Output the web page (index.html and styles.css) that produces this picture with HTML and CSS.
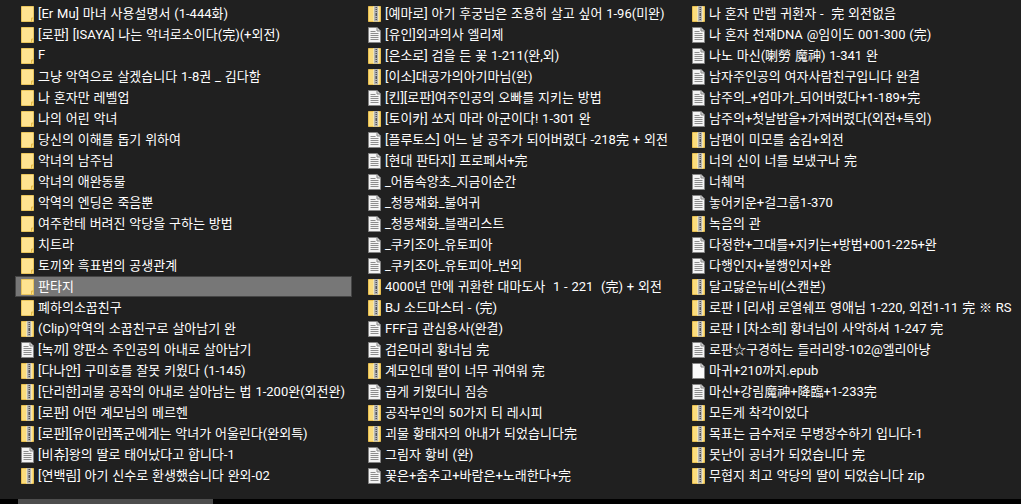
FILE: index.html
```html
<!DOCTYPE html>
<html lang="ko">
<head>
<meta charset="utf-8">
<title>파일 목록</title>
<link rel="stylesheet" href="styles.css">
</head>
<body>
<svg class="defs" width="0" height="0" aria-hidden="true">
  <defs>
    <symbol id="folder" viewBox="0 0 13 16">
      <path d="M.5.5h12v15H.5z" fill="#ffe390" stroke="#eac55c"/>
      <path d="M10.500 15.500v-3.500h2" fill="#f5d36b" stroke="#e2b94a"/>
    </symbol>
    <symbol id="zip" viewBox="0 0 13 16">
      <path d="M.5.500h12v15H.5z" fill="#fbdc7c" stroke="#e8bf50"/>
      <path d="M5 .5h6v15H5z" fill="#f4e6b0"/>
      <path d="M6 0h4v15.500H6z" fill="#b5b5b5"/>
      <path d="M7.500 1H9v1H7.500zM7.500 3H9v1H7.500zM7.500 5H9v1H7.500zM7.500 7H9v3H7.500zM7.500 11H9v1H7.500zM7.500 13H9v1H7.500z" fill="#555"/>
    </symbol>
    <symbol id="doc" viewBox="0 0 13 16">
      <path d="M.5.500h8.500l3.500 3.500v11.500H.5z" fill="#f4f4f4" stroke="#858585"/>
      <path d="M9 .5V4h3.500" fill="#d8d8d8" stroke="#858585"/>
      <path d="M2.500 4.500h5M2.500 6.500h8M2.500 8.500h8M2.500 10.500h8M2.500 12.500h8" stroke="#8c8c8c"/>
    </symbol>
    <symbol id="blank" viewBox="0 0 13 16">
      <path d="M.5.500h8.500l3.500 3.500v11.500H.5z" fill="#fbfbfb" stroke="#858585"/>
      <path d="M9 .5V4h3.500" fill="#e2e2e2" stroke="#858585"/>
    </symbol>
  </defs>
</svg>
<main class="view">
  <ul class="col col-a">
    <li class="row"><svg class="ico"><use href="#folder"/></svg><span>[Er Mu] 마녀 사용설명서 (1-444화)</span></li>
    <li class="row"><svg class="ico"><use href="#folder"/></svg><span>[로판] [ISAYA] 나는 악녀로소이다(完)(+외전)</span></li>
    <li class="row"><svg class="ico"><use href="#folder"/></svg><span>F</span></li>
    <li class="row"><svg class="ico"><use href="#folder"/></svg><span>그냥 악역으로 살겠습니다 1-8권 _ 김다함</span></li>
    <li class="row"><svg class="ico"><use href="#folder"/></svg><span>나 혼자만 레벨업</span></li>
    <li class="row"><svg class="ico"><use href="#folder"/></svg><span>나의 어린 악녀</span></li>
    <li class="row"><svg class="ico"><use href="#folder"/></svg><span>당신의 이해를 돕기 위하여</span></li>
    <li class="row"><svg class="ico"><use href="#folder"/></svg><span>악녀의 남주님</span></li>
    <li class="row"><svg class="ico"><use href="#folder"/></svg><span>악녀의 애완동물</span></li>
    <li class="row"><svg class="ico"><use href="#folder"/></svg><span>악역의 엔딩은 죽음뿐</span></li>
    <li class="row"><svg class="ico"><use href="#folder"/></svg><span>여주한테 버려진 악당을 구하는 방법</span></li>
    <li class="row"><svg class="ico"><use href="#folder"/></svg><span>치트라</span></li>
    <li class="row"><svg class="ico"><use href="#folder"/></svg><span>토끼와 흑표범의 공생관계</span></li>
    <li class="row selected"><svg class="ico"><use href="#folder"/></svg><span>판타지</span></li>
    <li class="row"><svg class="ico"><use href="#folder"/></svg><span>폐하의소꿉친구</span></li>
    <li class="row"><svg class="ico"><use href="#zip"/></svg><span>(Clip)악역의 소꿉친구로 살아남기 완</span></li>
    <li class="row"><svg class="ico"><use href="#doc"/></svg><span>[녹끼] 양판소 주인공의 아내로 살아남기</span></li>
    <li class="row"><svg class="ico"><use href="#zip"/></svg><span>[다나안] 구미호를 잘못 키웠다 (1-145)</span></li>
    <li class="row"><svg class="ico"><use href="#zip"/></svg><span>[단리한]괴물 공작의 아내로 살아남는 법 1-200완(외전완)</span></li>
    <li class="row"><svg class="ico"><use href="#zip"/></svg><span>[로판] 어떤 계모님의 메르헨</span></li>
    <li class="row"><svg class="ico"><use href="#zip"/></svg><span>[로판][유이란]폭군에게는 악녀가 어울린다(완외특)</span></li>
    <li class="row"><svg class="ico"><use href="#doc"/></svg><span>[비츄]왕의 딸로 태어났다고 합니다-1</span></li>
    <li class="row"><svg class="ico"><use href="#zip"/></svg><span>[연백림] 아기 신수로 환생했습니다 완외-02</span></li>
  </ul>
  <ul class="col col-b">
    <li class="row"><svg class="ico"><use href="#zip"/></svg><span>[예마로] 아기 후궁님은 조용히 살고 싶어 1-96(미완)</span></li>
    <li class="row"><svg class="ico"><use href="#doc"/></svg><span>[유인]외과의사 엘리제</span></li>
    <li class="row"><svg class="ico"><use href="#zip"/></svg><span>[은소로] 검을 든 꽃 1-211(완,외)</span></li>
    <li class="row"><svg class="ico"><use href="#zip"/></svg><span>[이소]대공가의아기마님(완)</span></li>
    <li class="row"><svg class="ico"><use href="#doc"/></svg><span>[킨][로판]여주인공의 오빠를 지키는 방법</span></li>
    <li class="row"><svg class="ico"><use href="#zip"/></svg><span>[토이카] 쏘지 마라 아군이다! 1-301 완</span></li>
    <li class="row"><svg class="ico"><use href="#doc"/></svg><span>[플루토스] 어느 날 공주가 되어버렸다 -218完 + 외전</span></li>
    <li class="row"><svg class="ico"><use href="#doc"/></svg><span>[현대 판타지] 프로페서+完</span></li>
    <li class="row"><svg class="ico"><use href="#doc"/></svg><span>_어둠속양초_지금이순간</span></li>
    <li class="row"><svg class="ico"><use href="#doc"/></svg><span>_청몽채화_불여귀</span></li>
    <li class="row"><svg class="ico"><use href="#doc"/></svg><span>_청몽채화_블랙리스트</span></li>
    <li class="row"><svg class="ico"><use href="#doc"/></svg><span>_쿠키조아_유토피아</span></li>
    <li class="row"><svg class="ico"><use href="#doc"/></svg><span>_쿠키조아_유토피아_번외</span></li>
    <li class="row"><svg class="ico"><use href="#zip"/></svg><span>4000년 만에 귀환한 대마도사  1 - 221  (完) + 외전</span></li>
    <li class="row"><svg class="ico"><use href="#zip"/></svg><span>BJ 소드마스터 - (完)</span></li>
    <li class="row"><svg class="ico"><use href="#doc"/></svg><span>FFF급 관심용사(완결)</span></li>
    <li class="row"><svg class="ico"><use href="#doc"/></svg><span>검은머리 황녀님 完</span></li>
    <li class="row"><svg class="ico"><use href="#zip"/></svg><span>계모인데 딸이 너무 귀여워 完</span></li>
    <li class="row"><svg class="ico"><use href="#doc"/></svg><span>곱게 키웠더니 짐승</span></li>
    <li class="row"><svg class="ico"><use href="#zip"/></svg><span>공작부인의 50가지 티 레시피</span></li>
    <li class="row"><svg class="ico"><use href="#zip"/></svg><span>괴물 황태자의 아내가 되었습니다完</span></li>
    <li class="row"><svg class="ico"><use href="#doc"/></svg><span>그림자 황비 (완)</span></li>
    <li class="row"><svg class="ico"><use href="#doc"/></svg><span>꽃은+춤추고+바람은+노래한다+完</span></li>
  </ul>
  <ul class="col col-c">
    <li class="row"><svg class="ico"><use href="#zip"/></svg><span>나 혼자 만렙 귀환자 -  完 외전없음</span></li>
    <li class="row"><svg class="ico"><use href="#doc"/></svg><span>나 혼자 천재DNA @임이도 001-300 (完)</span></li>
    <li class="row"><svg class="ico"><use href="#doc"/></svg><span>나노 마신(喇勞 魔神) 1-341 완</span></li>
    <li class="row"><svg class="ico"><use href="#doc"/></svg><span>남자주인공의 여자사람친구입니다 완결</span></li>
    <li class="row"><svg class="ico"><use href="#doc"/></svg><span>남주의_+엄마가_되어버렸다+1-189+完</span></li>
    <li class="row"><svg class="ico"><use href="#doc"/></svg><span>남주의+첫날밤을+가져버렸다(외전+특외)</span></li>
    <li class="row"><svg class="ico"><use href="#zip"/></svg><span>남편이 미모를 숨김+외전</span></li>
    <li class="row"><svg class="ico"><use href="#zip"/></svg><span>너의 신이 너를 보냈구나 完</span></li>
    <li class="row"><svg class="ico"><use href="#doc"/></svg><span>너췌먹</span></li>
    <li class="row"><svg class="ico"><use href="#doc"/></svg><span>놓어키운+걸그룹1-370</span></li>
    <li class="row"><svg class="ico"><use href="#zip"/></svg><span>녹음의 관</span></li>
    <li class="row"><svg class="ico"><use href="#doc"/></svg><span>다정한+그대를+지키는+방법+001-225+완</span></li>
    <li class="row"><svg class="ico"><use href="#doc"/></svg><span>다행인지+불행인지+완</span></li>
    <li class="row"><svg class="ico"><use href="#zip"/></svg><span>달고닳은뉴비(스캔본)</span></li>
    <li class="row"><svg class="ico"><use href="#zip"/></svg><span>로판 l [리샤] 로열쉐프 영애님 1-220, 외전1-11 完 ※ RS</span></li>
    <li class="row"><svg class="ico"><use href="#zip"/></svg><span>로판 l [차소희] 황녀님이 사악하셔 1-247 完</span></li>
    <li class="row"><svg class="ico"><use href="#doc"/></svg><span>로판☆구경하는 들러리양-102@엘리아냥</span></li>
    <li class="row"><svg class="ico"><use href="#blank"/></svg><span>마귀+210까지.epub</span></li>
    <li class="row"><svg class="ico"><use href="#doc"/></svg><span>마신+강림魔神+降臨+1-233完</span></li>
    <li class="row"><svg class="ico"><use href="#zip"/></svg><span>모든게 착각이었다</span></li>
    <li class="row"><svg class="ico"><use href="#zip"/></svg><span>목표는 금수저로 무병장수하기 입니다-1</span></li>
    <li class="row"><svg class="ico"><use href="#zip"/></svg><span>못난이 공녀가 되었습니다 完</span></li>
    <li class="row"><svg class="ico"><use href="#zip"/></svg><span>무협지 최고 악당의 딸이 되었습니다 zip</span></li>
  </ul>
</main>
<div class="hscroll"><div class="thumb"></div></div>
</body>
</html>
```
FILE: styles.css
```css
* { box-sizing: border-box; }
html, body { margin: 0; padding: 0; }
body {
  width: 1021px;
  height: 504px;
  overflow: hidden;
  display: flex;
  flex-direction: column;
  background: #202020;
  color: #fff;
  font-family: Roboto, "Noto Sans CJK KR", sans-serif;
  font-size: 13px;
  word-spacing: 0.6px;
}
.defs { position: absolute; }
.view {
  flex: 1;
  display: grid;
  grid-template-columns: 347px 324px 1fr;
  padding: 3px 0 0 15px;
  min-height: 0;
}
.col { list-style: none; margin: 0; padding: 0; min-width: 0; }
.row {
  height: 21px;
  display: flex;
  align-items: center;
  gap: 4px;
  padding-left: 6px;
  white-space: pre;
  border: 1px solid transparent;
  border-left-width: 0;
  border-right-width: 0;
}
.row span { margin-bottom: 2px; }
.col-a .row { width: 337px; }
.selected {
  background: #777;
  border: 1px solid #454545;
  padding-left: 5px;
}
.ico { width: 13px; height: 16px; flex: none; margin-top: 1px; }
.hscroll { height: 5px; background: #000; flex: none; }
.thumb { width: 195px; height: 100%; margin-left: 18px; background: #4d4d4d; }
```
